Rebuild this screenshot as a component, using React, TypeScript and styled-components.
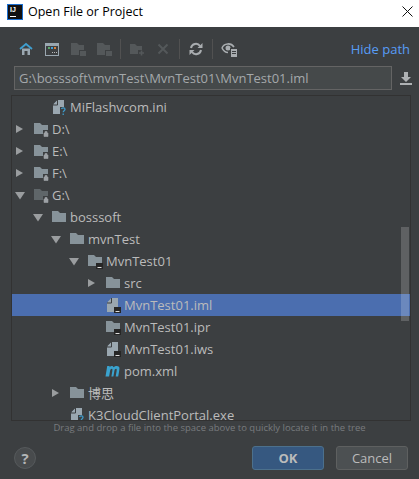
import React from "react";
import styled, { createGlobalStyle } from "styled-components";

const GlobalStyle = createGlobalStyle`
  html, body {
    margin: 0;
    padding: 0;
    background: #3c3f41;
  }
`;

const Dialog = styled.div`
  width: 419px;
  height: 479px;
  display: flex;
  flex-direction: column;
  background: #3c3f41;
  font-family: "Open Sans", "Noto Sans CJK SC", sans-serif;
  overflow: hidden;
`;

const TitleBar = styled.div`
  height: 27px;
  box-sizing: border-box;
  flex: none;
  display: flex;
  align-items: center;
  background: #fff;
  padding: 0 6px 4px 7px;
  color: #000;
  font-size: 12.500px;
`;

const Logo = styled.div`
  width: 16px;
  height: 16px;
  box-sizing: border-box;
  margin-right: 5px;
  background: #111;
  border: 1px solid #1c6fd0;
  color: #fff;
  font: bold 7px/9px "Liberation Sans", sans-serif;
  padding-left: 2px;
  position: relative;

  &::after {
    content: "";
    position: absolute;
    left: 2px;
    bottom: 2px;
    width: 6px;
    height: 1px;
    background: #fff;
  }
`;

const TitleText = styled.span`
  flex: 1;
`;

const Toolbar = styled.div`
  height: 26px;
  flex: none;
  margin-top: 9px;
  padding: 0 9px 0 13px;
  display: flex;
  align-items: center;
`;

const ToolButton = styled.div`
  width: 26px;
  height: 26px;
  display: flex;
  align-items: center;
  justify-content: center;
`;

const Separator = styled.div`
  width: 1px;
  height: 20px;
  margin: 0 3px;
  background: #515151;
`;

const HidePath = styled.span`
  margin-left: auto;
  color: #589df6;
  font-size: 13px;
`;

const PathRow = styled.div`
  flex: none;
  display: flex;
  align-items: center;
  margin-top: 4px;
  padding-left: 14px;
`;

const PathField = styled.div`
  width: 378px;
  height: 24px;
  box-sizing: border-box;
  background: #45494a;
  border: 1px solid #646464;
  color: #a4a8aa;
  font-size: 13px;
  line-height: 22px;
  padding-left: 4px;
`;

const SaveButton = styled.div`
  flex: 1;
  display: flex;
  justify-content: center;
`;

const Tree = styled.div`
  position: relative;
  flex: none;
  width: 400px;
  height: 326px;
  box-sizing: border-box;
  margin: 5px 0 0 11px;
  border: 1px solid #323232;
  overflow: hidden;
`;

const Row = styled.div<{ $depth: number; $selected?: boolean }>`
  height: 22px;
  display: flex;
  align-items: center;
  padding-left: ${(p) => 3 + p.$depth * 18}px;
  background: ${(p) => (p.$selected ? "#4b6eaf" : "transparent")};
  color: #bbbbbb;
  font-size: 13px;
  line-height: 12px;
  white-space: nowrap;
`;

const ArrowCell = styled.div`
  width: 18px;
  flex: none;
  display: flex;
  align-items: center;
`;

const IconCell = styled.div`
  width: 16px;
  height: 16px;
  flex: none;
  margin-right: 3px;
`;

const Scrollbar = styled.div`
  position: absolute;
  top: 131px;
  right: 1px;
  width: 8px;
  height: 94px;
  background: rgba(255, 255, 255, 0.18);
`;

const Hint = styled.div`
  flex: none;
  height: 14px;
  text-align: center;
  color: #787b7e;
  font-size: 9.500px;
  line-height: 14px;
`;

const Footer = styled.div`
  flex: none;
  margin-top: 11px;
  padding: 0 11px 0 14px;
  display: flex;
  align-items: center;
`;

const HelpButton = styled.div`
  width: 22px;
  height: 22px;
  border-radius: 50%;
  box-sizing: border-box;
  background: #484b4d;
  border: 1px solid #565a5c;
  color: #b4b6b7;
  font: bold 15px/20px "Open Sans", sans-serif;
  text-align: center;
  margin-right: auto;
`;

const Button = styled.div<{ $primary?: boolean }>`
  width: 72px;
  height: 24px;
  box-sizing: border-box;
  border-radius: 3px;
  margin-left: 12px;
  text-align: center;
  font-size: 13px;
  line-height: 22px;
  font-weight: ${(p) => (p.$primary ? 700 : 400)};
  color: #bbbbbb;
  background: ${(p) => (p.$primary ? "#365880" : "#4c5052")};
  border: 1px solid ${(p) => (p.$primary ? "#4c708c" : "#5e6060")};
`;

const ArrowRight = () => (
  <svg width="9" height="10" viewBox="0 0 9 10">
    <path d="M1 1l7 4-7 4z" fill="#9a9d9f" />
  </svg>
);

const ArrowDown = () => (
  <svg width="10" height="9" viewBox="0 0 10 9">
    <path d="M0 1h10L5 8.5z" fill="#9a9d9f" />
  </svg>
);

const Folder = ({ color = "#87939a", children }: { color?: string; children?: React.ReactNode }) => (
  <svg width="16" height="16" viewBox="0 0 16 16">
    <path d="M1 2h6l2 2h6v9H1z" fill={color} />
    {children}
  </svg>
);

const Lock = () => (
  <g>
    <rect x="10" y="9" width="6" height="7" fill="#3c3f41" />
    <path d="M11 12h4v3.500h-4zM12 12v-1.500h2V12" fill="#9da2a6" stroke="#9da2a6" strokeWidth="0.6" />
  </g>
);

const ModuleMark = () => (
  <g>
    <rect x="9" y="10" width="7" height="6" fill="#262626" />
    <rect x="10.500" y="14" width="4" height="1" fill="#ddd" />
  </g>
);

const Page = ({ children }: { children?: React.ReactNode }) => (
  <svg width="16" height="16" viewBox="0 0 16 16">
    <path d="M7 1h6v14H2V6z" fill="#9aa7b0" />
    <path d="M6 1.500V5H2.500z" fill="#9aa7b0" />
    <path d="M6.500 1v5H2" fill="none" stroke="#3c3f41" strokeWidth="1" />
    {children}
  </svg>
);

const Unknown = () => (
  <Page>
    <rect x="9" y="8" width="7" height="8" fill="#3c3f41" />
    <path d="M10.500 10c.5-1.500 3.500-1.500 3.500.3 0 1.400-1.800 1.400-1.800 3M12.200 14.500v1.500" fill="none" stroke="#3e9ac9" strokeWidth="1.300" />
  </Page>
);

const MavenIcon = () => (
  <svg width="16" height="16" viewBox="0 0 16 16">
    <path
      d="M0.500 13.500L2.200 3h2.500l-.2 1.200C5.800 2.800 7.900 2.600 8.600 4.300 10.100 2.700 12.800 2.500 13.900 3.800c.8.900.6 2.300.1 5.200l-.8 4.500h-2.500l.9-5.200c.2-1.200.3-2.500-.5-2.500-.8 0-1.500.7-1.700 1.900l-1 5.800H6.400l.9-5.200c.2-1.200.3-2.500-.5-2.500-.8 0-1.500.8-1.700 1.900l-1 5.800z"
      fill="#3aa3cf"
    />
  </svg>
);

const HomeIcon = () => (
  <svg width="14" height="14" viewBox="0 0 14 14">
    <path d="M3 6.500h8V13H8.500V9h-3v4H3z" fill="#9aa7b0" />
    <path d="M1 7l6-5 6 5" fill="none" stroke="#3f9fd0" strokeWidth="1.800" />
  </svg>
);

const ConsoleIcon = () => (
  <svg width="14" height="13" viewBox="0 0 14 13">
    <rect x="0.500" y="0.500" width="13" height="12" fill="#3c3f41" stroke="#9aa7b0" />
    <rect x="1" y="1" width="12" height="2" fill="#9aa7b0" />
    <rect x="3" y="4" width="2" height="2" fill="#59a869" />
    <rect x="6" y="4" width="2" height="2" fill="#40a0d8" />
    <rect x="9" y="4" width="2" height="2" fill="#d9803a" />
    <path d="M7 9.500h1M9 9.500h1M11 9.500h1" stroke="#bbb" />
  </svg>
);

const DimFolderIcon = () => (
  <svg width="16" height="16" viewBox="0 0 16 16">
    <path d="M1 2h6l2 2h5v5H9v5H1z" fill="#54585a" />
    <rect x="10" y="10" width="6" height="5" fill="#54585a" />
  </svg>
);

const NewFolderIcon = () => (
  <svg width="16" height="16" viewBox="0 0 16 16">
    <path d="M1 3h5l2 2h5v4H9v4H1z" fill="#54585a" />
    <path d="M12.500 9.500v5M10 12h5" stroke="#54585a" strokeWidth="1.600" />
  </svg>
);

const DeleteIcon = () => (
  <svg width="12" height="12" viewBox="0 0 12 12">
    <path d="M1.500 1.500l9 9M10.500 1.500l-9 9" stroke="#54585a" strokeWidth="2" />
  </svg>
);

const RefreshIcon = () => (
  <svg width="14" height="14" viewBox="0 0 14 14">
    <path d="M2 6a5 5 0 0 1 9-2M12 8a5 5 0 0 1-9 2" fill="none" stroke="#a9adb0" strokeWidth="2" />
    <path d="M13.500 1v5h-5zM.5 13V8h5z" fill="#a9adb0" />
  </svg>
);

const ShowHiddenIcon = () => (
  <svg width="16" height="16" viewBox="0 0 16 16">
    <path d="M1 7c2-5 9-5.500 12-1" fill="none" stroke="#a9adb0" strokeWidth="1.600" />
    <path d="M1 7c1.500 3 3.500 4.500 6 4.500" fill="none" stroke="#a9adb0" strokeWidth="1.600" />
    <circle cx="7" cy="7" r="2.500" fill="#a9adb0" />
    <rect x="9" y="7" width="7" height="9" fill="#3c3f41" />
    <rect x="10" y="8" width="6" height="8" fill="#a9adb0" />
    <path d="M11 10.500h4M11 12.500h4" stroke="#3c3f41" />
  </svg>
);

const SaveIcon = () => (
  <svg width="12" height="13" viewBox="0 0 12 13">
    <path d="M4 0h4v5h3L6 10 1 5h3zM0 11h12v2H0z" fill="#aeb1b3" />
  </svg>
);

const CloseIcon = () => (
  <svg width="11" height="11" viewBox="0 0 11 11">
    <path d="M.5.5l10 10M10.500.5l-10 10" stroke="#111" strokeWidth="1" />
  </svg>
);

type TreeItem = {
  label: string;
  depth: number;
  arrow?: "right" | "down";
  icon: React.ReactNode;
  selected?: boolean;
};

const items: TreeItem[] = [
  { label: "MiFlashvcom.ini", depth: 1, icon: <Unknown /> },
  { label: "D:\\", depth: 0, arrow: "right", icon: <Folder><Lock /></Folder> },
  { label: "E:\\", depth: 0, arrow: "right", icon: <Folder><Lock /></Folder> },
  { label: "F:\\", depth: 0, arrow: "right", icon: <Folder><Lock /></Folder> },
  { label: "G:\\", depth: 0, arrow: "down", icon: <Folder color="#5f6669"><Lock /></Folder> },
  { label: "bosssoft", depth: 1, arrow: "down", icon: <Folder /> },
  { label: "mvnTest", depth: 2, arrow: "down", icon: <Folder /> },
  { label: "MvnTest01", depth: 3, arrow: "down", icon: <Folder><ModuleMark /></Folder> },
  { label: "src", depth: 4, arrow: "right", icon: <Folder /> },
  { label: "MvnTest01.iml", depth: 4, selected: true, icon: <Page><ModuleMark /></Page> },
  { label: "MvnTest01.ipr", depth: 4, icon: <Folder><ModuleMark /></Folder> },
  { label: "MvnTest01.iws", depth: 4, icon: <Page><ModuleMark /></Page> },
  { label: "pom.xml", depth: 4, icon: <MavenIcon /> },
  { label: "博思", depth: 2, arrow: "right", icon: <Folder /> },
  { label: "K3CloudClientPortal.exe", depth: 2, icon: <Unknown /> },
];

const App = () => (
  <Dialog>
    <GlobalStyle />
    <TitleBar>
      <Logo>IJ</Logo>
      <TitleText>Open File or Project</TitleText>
      <CloseIcon />
    </TitleBar>
    <Toolbar>
      <ToolButton><HomeIcon /></ToolButton>
      <ToolButton><ConsoleIcon /></ToolButton>
      <ToolButton><DimFolderIcon /></ToolButton>
      <ToolButton><DimFolderIcon /></ToolButton>
      <Separator />
      <ToolButton><NewFolderIcon /></ToolButton>
      <ToolButton><DeleteIcon /></ToolButton>
      <Separator />
      <ToolButton><RefreshIcon /></ToolButton>
      <Separator />
      <ToolButton><ShowHiddenIcon /></ToolButton>
      <HidePath>Hide path</HidePath>
    </Toolbar>
    <PathRow>
      <PathField>G:\bosssoft\mvnTest\MvnTest01\MvnTest01.iml</PathField>
      <SaveButton><SaveIcon /></SaveButton>
    </PathRow>
    <Tree>
      {items.map((item) => (
        <Row key={item.label} $depth={item.depth} $selected={item.selected}>
          <ArrowCell>
            {item.arrow === "right" && <ArrowRight />}
            {item.arrow === "down" && <ArrowDown />}
          </ArrowCell>
          <IconCell>{item.icon}</IconCell>
          {item.label}
        </Row>
      ))}
      <Scrollbar />
    </Tree>
    <Hint>Drag and drop a file into the space above to quickly locate it in the tree</Hint>
    <Footer>
      <HelpButton>?</HelpButton>
      <Button $primary>OK</Button>
      <Button>Cancel</Button>
    </Footer>
  </Dialog>
);

export default App;
